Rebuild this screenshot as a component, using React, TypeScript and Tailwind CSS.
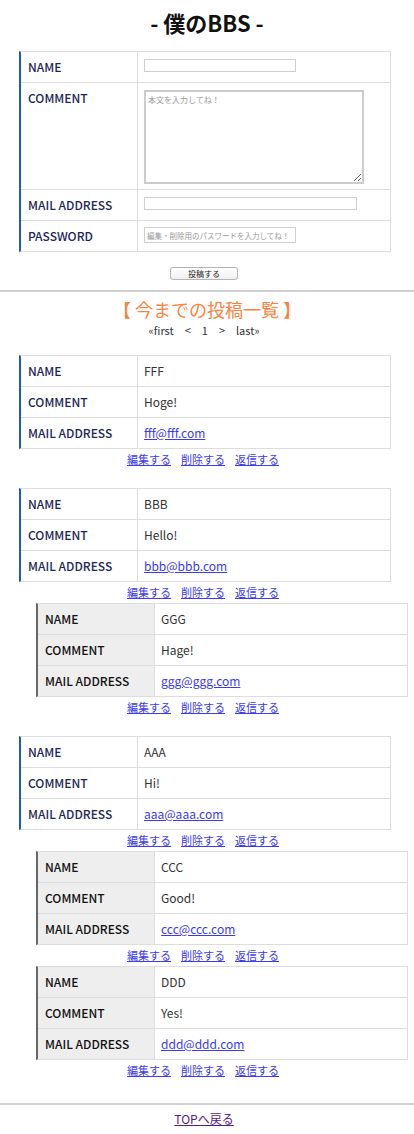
import React from "react";

const FONT = "font-['Noto_Sans_CJK_JP','Noto_Sans',sans-serif]";

type Post = { name: string; comment: string; mail: string; replies?: Post[] };

const posts: Post[] = [
  { name: "FFF", comment: "Hoge!", mail: "fff@fff.com" },
  {
    name: "BBB",
    comment: "Hello!",
    mail: "bbb@bbb.com",
    replies: [{ name: "GGG", comment: "Hage!", mail: "ggg@ggg.com" }],
  },
  {
    name: "AAA",
    comment: "Hi!",
    mail: "aaa@aaa.com",
    replies: [
      { name: "CCC", comment: "Good!", mail: "ccc@ccc.com" },
      { name: "DDD", comment: "Yes!", mail: "ddd@ddd.com" },
    ],
  },
];

function Row({
  label,
  children,
  reply,
  last,
  h = "h-[31px]",
}: {
  label: string;
  children: React.ReactNode;
  reply?: boolean;
  last?: boolean;
  h?: string;
}) {
  return (
    <div className={`flex ${last ? "h-[30px]" : h} ${last ? "" : "border-b border-[#dddddd]"}`}>
      <div
        className={`w-[117px] shrink-0 border-r border-[#dddddd] pl-[7px] pt-[7px] text-[12px] leading-[16px] font-medium ${
          reply ? "bg-[#eeeeee] text-[#111111]" : "bg-white text-[#1c2857]"
        }`}
      >
        {label}
      </div>
      <div className="flex-1 pl-[6px] pt-[7px] text-[12px] leading-[16px] text-[#333333]">
        {children}
      </div>
    </div>
  );
}

function Actions() {
  return (
    <div className="flex h-[21px] items-center justify-center gap-[10px] pr-[8px] text-[11px] leading-[21px]">
      <a href="#" className="text-[#3a3aef] underline">編集する</a>
      <a href="#" className="text-[#3a3aef] underline">削除する</a>
      <a href="#" className="text-[#3a3aef] underline">返信する</a>
    </div>
  );
}

function PostTable({ p, reply }: { p: Post; reply?: boolean }) {
  return (
    <div>
      <div
        className={`w-[372px] border border-[#dddddd] border-l-2 ${
          reply ? "ml-[36px] border-l-[#666666]" : "ml-[19px] border-l-[#1f5fa8]"
        }`}
      >
        <Row label="NAME" reply={reply}>{p.name}</Row>
        <Row label="COMMENT" reply={reply}>{p.comment}</Row>
        <Row label="MAIL ADDRESS" reply={reply} last>
          <a href="#" className="text-[#3a3aef] underline">{p.mail}</a>
        </Row>
      </div>
      <Actions />
    </div>
  );
}

export default function App() {
  return (
    <div className={`${FONT} min-h-[1134px] w-[414px] bg-white text-[#111]`}>
      <h1 className="pt-[8px] text-center text-[22px] font-bold leading-[28px] text-[#111]">
        - 僕のBBS -
      </h1>

      <div className="ml-[19px] mt-[15px] w-[372px] border border-[#dddddd] border-l-2 border-l-[#1f5fa8]">
        <Row label="NAME">
          <input className="block h-[13px] w-[152px] border border-[#cfcfcf] bg-white" />
        </Row>
        <Row label="COMMENT" h="h-[107px]">
          <textarea
            placeholder="本文を入力してね！"
            className="block h-[94px] w-[220px] border-2 border-[#cccccc] bg-white p-[2px] text-[8px] leading-[11px] placeholder:text-[#999]"
          />
        </Row>
        <Row label="MAIL ADDRESS">
          <input className="block h-[13px] w-[213px] border border-[#cfcfcf] bg-white" />
        </Row>
        <Row label="PASSWORD" last>
          <input
            placeholder="編集・削除用のパスワードを入力してね！"
            className="-mt-[1px] block h-[16px] w-[152px] border border-[#cfcfcf] bg-white px-[2px] text-[7.5px] leading-[12px] placeholder:text-[#999]"
          />
        </Row>
      </div>

      <div className="mt-[15px] flex justify-center pr-[6px]">
        <button className="h-[13px] w-[68px] rounded-[3px] border border-[#b5b5b5] bg-gradient-to-b from-white to-[#f0f0f0] text-[8px] leading-[11px] text-[#222]">
          投稿する
        </button>
      </div>

      <div className="mt-[10px] border-t-2 border-[#d0d0d0]" />

      <div className="mt-[5px] text-center text-[18px] leading-[24px] text-[#ff7f3c]">
        【 今までの投稿一覧 】
      </div>
      <div className="mt-[1px] pr-[6px] text-center text-[11px] leading-[16px] text-[#333] [word-spacing:4px]">
        «first　&lt;　1　&gt;　last»
      </div>

      <div className="mt-[17px] flex flex-col gap-[18px]">
        {posts.map((p) => (
          <div key={p.name}>
            <PostTable p={p} />
            {p.replies?.map((r) => (
              <div key={r.name}>
                <PostTable p={r} reply />
              </div>
            ))}
          </div>
        ))}
      </div>

      <div className="mt-[22px] border-t-2 border-[#d0d0d0]" />
      <div className="mt-[4px] pr-[6px] text-center text-[12px] leading-[20px]">
        <a href="#" className="text-[#551a8b] underline">TOPへ戻る</a>
      </div>
    </div>
  );
}
